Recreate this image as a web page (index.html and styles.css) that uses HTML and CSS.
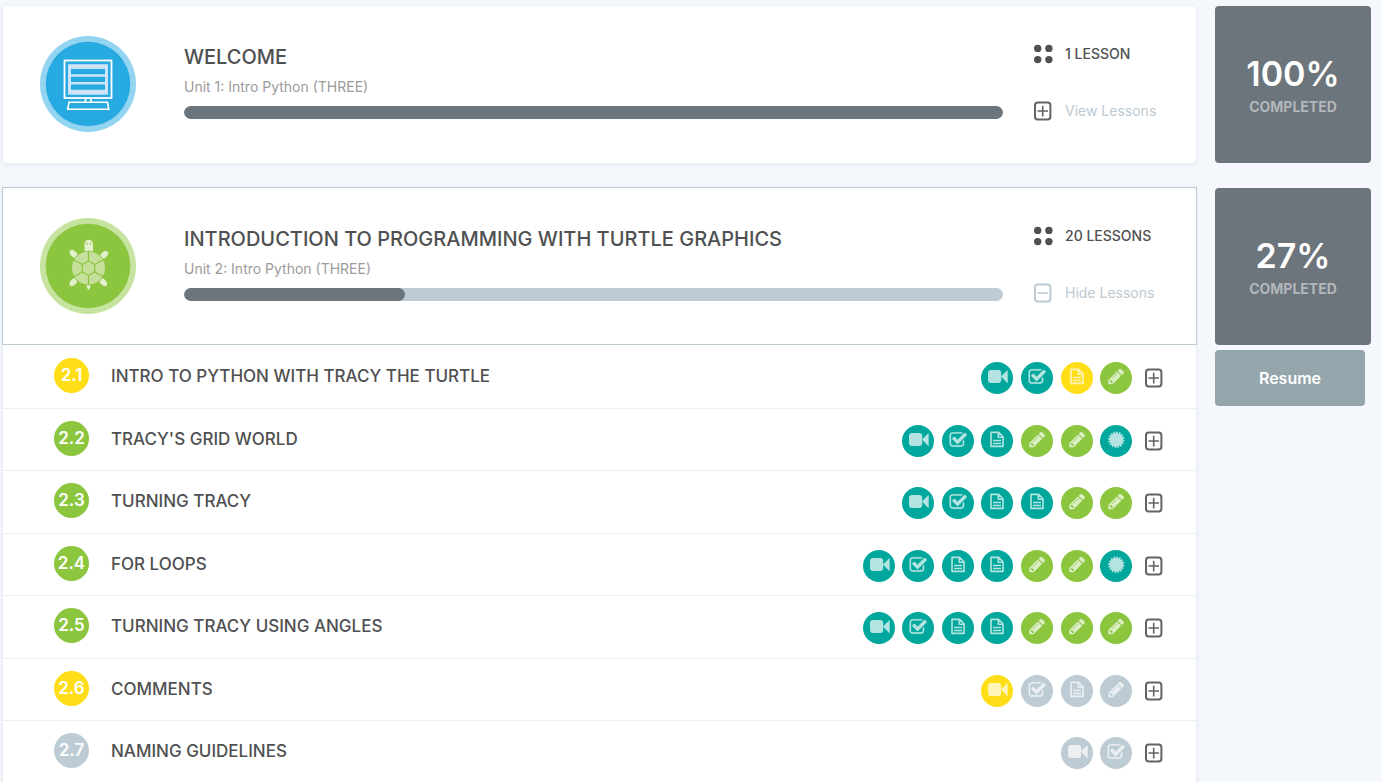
FILE: index.html
```html
<!DOCTYPE html>
<html lang="en">
<head>
<meta charset="utf-8">
<title>Intro Python (THREE)</title>
<meta name="viewport" content="width=device-width, initial-scale=1">
<link rel="stylesheet" href="styles.css">
</head>
<body>
<svg class="sprite" aria-hidden="true">
  <symbol id="video" viewBox="0 0 32 32">
    <rect x="7" y="8" width="13.2" height="13" rx="3"/>
    <path d="M20 14.5 26 8.4q.7-.5.7.4v11.6q0 .9-.7.4z"/>
  </symbol>
  <symbol id="check" viewBox="0 0 32 32">
    <path transform="translate(7 5.9) scale(.01026)" stroke="currentColor" stroke-width="30" d="M1472 930v318q0 119-84.500 203.500t-203.500 84.500h-832q-119 0-203.500-84.500t-84.500-203.500v-832q0-119 84.500-203.500t203.500-84.500h832q63 0 117 25 15 7 18 23 3 17-9 29l-49 49q-10 10-23 10-3 0-9-2-23-6-45-6h-832q-66 0-113 47t-47 113v832q0 66 47 113t113 47h832q66 0 113-47t47-113v-254q0-13 9-22l64-64q10-10 23-10 6 0 12 3 20 8 20 29zm231-489l-814 814q-24 24-57 24t-57-24l-430-430q-24-24-24-57t24-57l110-110q24-24 57-24t57 24l263 263 647-647q24-24 57-24t57 24l110 110q24 24 24 57t-24 57z"/>
  </symbol>
  <symbol id="doc" viewBox="0 0 32 32">
    <path fill="none" stroke="currentColor" stroke-width="1.600" stroke-linejoin="round" d="M10 7.400h7.600l4.400 4.400v9.600H10zM17.300 7.600v4.600h4.600"/>
    <path fill="none" stroke="currentColor" stroke-width="1.500" d="M12 15.400h8M12 18.400h8"/>
  </symbol>
  <symbol id="pencil" viewBox="0 0 32 32">
    <path transform="translate(7 5.2) scale(.0103)" d="M491 1536l91-91-235-235-91 91v107h128v128h107zm523-928q0-22-22-22-10 0-17 7l-542 542q-7 7-7 17 0 22 22 22 10 0 17-7l542-542q7-7 7-17zm-54-192l416 416-832 832h-416v-416zm683 96q0 53-37 90l-166 166-416-416 166-165q36-38 90-38 53 0 91 38l235 234q37 39 37 91z"/>
  </symbol>
  <symbol id="badge" viewBox="0 0 32 32">
    <circle cx="16.300" cy="14.700" r="6.800"/>
    <circle cx="16.300" cy="14.700" r="7.200" fill="none" stroke="currentColor" stroke-width="2" pathLength="32" stroke-dasharray="1.200 .8"/>
  </symbol>
  <symbol id="plus" viewBox="0 0 18 20">
    <rect x="1" y="1.500" width="15.400" height="17" rx="2.800" fill="none" stroke="currentColor" stroke-width="2"/>
    <path d="M8.700 4.800v10.600M3.400 10h10.600" fill="none" stroke="currentColor" stroke-width="1.600"/>
  </symbol>
  <symbol id="minus" viewBox="0 0 18 20">
    <rect x="1" y="1.500" width="15.400" height="17" rx="2.800" fill="none" stroke="currentColor" stroke-width="2"/>
    <path d="M3.400 10h10.600" fill="none" stroke="currentColor" stroke-width="1.600"/>
  </symbol>
  <symbol id="dots" viewBox="0 0 20 20">
    <circle cx="3.700" cy="4.400" r="3.700"/><circle cx="14.900" cy="4.400" r="3.700"/>
    <circle cx="3.700" cy="15.600" r="3.700"/><circle cx="14.900" cy="15.600" r="3.700"/>
  </symbol>
</svg>

<main class="course">
  <section class="unit">
    <div class="card">
      <header class="unit-head">
        <svg class="unit-icon" viewBox="0 0 96 96" aria-hidden="true">
          <circle cx="48" cy="48" r="48" fill="#93d4f0"/>
          <circle cx="48" cy="48" r="42.300" fill="#27aae1"/>
          <rect x="24.500" y="24.500" width="47" height="37.500" fill="none" stroke="#fff" stroke-width="1.800"/>
          <rect x="28" y="28.200" width="40" height="30.500" fill="#cfe3f6"/>
          <path d="M31 33h34v5.300H31zM31 40.700h34v5.300H31zM31 48.400h34v5.300H31z" fill="#27aae1"/>
          <path d="M46 62l-1 4M50.500 62l1 4M29 66.300h38.500l1.300 7H27.700z" fill="none" stroke="#fff" stroke-width="1.600"/>
        </svg>
        <div class="unit-info">
          <h2 class="unit-title">WELCOME</h2>
          <p class="unit-sub">Unit 1: Intro Python (THREE)</p>
          <div class="bar" role="progressbar" aria-label="Welcome progress" aria-valuenow="100"><div class="bar-fill" style="width:100%"></div></div>
        </div>
        <div class="unit-meta">
          <p class="count"><svg class="dots"><use href="#dots"/></svg>1 LESSON</p>
          <button type="button" class="toggle"><svg class="box"><use href="#plus"/></svg>View Lessons</button>
        </div>
      </header>
    </div>
    <aside class="side">
      <div class="score"><strong class="percent">100%</strong><span class="label">COMPLETED</span></div>
    </aside>
  </section>

  <section class="unit">
    <div class="card">
      <header class="unit-head open">
        <svg class="unit-icon" viewBox="0 0 96 96" aria-hidden="true">
          <circle cx="48" cy="48" r="48" fill="#c6e39f"/>
          <circle cx="48" cy="48" r="42.300" fill="#8cc63f"/>
          <g fill="#e2f0cc">
            <path d="M44.500 33v-7a4.300 4.300 0 0 1 8.600 0v7z"/>
            <ellipse cx="33.700" cy="36" rx="5" ry="3" transform="rotate(45 33.700 36)"/>
            <ellipse cx="64" cy="37" rx="5" ry="3" transform="rotate(-42 64 37)"/>
            <ellipse cx="33.500" cy="64" rx="5" ry="3" transform="rotate(-45 33.500 64)"/>
            <ellipse cx="63" cy="64" rx="5" ry="3" transform="rotate(45 63 64)"/>
            <path d="M46.500 67h4q0 3-2 5-2-2-2-5z"/>
          </g>
          <circle cx="47.300" cy="25.800" r=".8" fill="#8cc63f"/><circle cx="50.600" cy="25.800" r=".8" fill="#8cc63f"/>
          <circle cx="48.500" cy="50" r="17.300" fill="#8cc63f"/>
          <circle cx="48.500" cy="50" r="16.500" fill="#c5e09b"/>
          <path d="M48.500 43l6.200 3.500v7.400l-6.200 3.600-6.200-3.600v-7.400zM48.500 33v10M48.500 57.500V67M54.700 46.500l8.300-4.600M42.300 46.500 34 41.900M54.700 53.900l8.300 4.700M42.300 53.900 34 58.600" fill="none" stroke="#8cc63f" stroke-width="1.200"/>
        </svg>
        <div class="unit-info">
          <h2 class="unit-title">INTRODUCTION TO PROGRAMMING WITH TURTLE GRAPHICS</h2>
          <p class="unit-sub">Unit 2: Intro Python (THREE)</p>
          <div class="bar" role="progressbar" aria-label="Turtle graphics progress" aria-valuenow="27"><div class="bar-fill" style="width:27%"></div></div>
        </div>
        <div class="unit-meta">
          <p class="count"><svg class="dots"><use href="#dots"/></svg>20 LESSONS</p>
          <button type="button" class="toggle"><svg class="box box-light"><use href="#minus"/></svg>Hide Lessons</button>
        </div>
      </header>

      <ul class="lessons">
        <li class="lesson">
          <span class="num yellow">2.1</span><h3 class="lesson-title">INTRO TO PYTHON WITH TRACY THE TURTLE</h3>
          <div class="acts four">
            <a href="#" class="act teal" aria-label="Video"><svg><use href="#video"/></svg></a>
            <a href="#" class="act teal" aria-label="Quiz"><svg><use href="#check"/></svg></a>
            <a href="#" class="act yellow" aria-label="Example"><svg><use href="#doc"/></svg></a>
            <a href="#" class="act green" aria-label="Exercise"><svg><use href="#pencil"/></svg></a>
          </div>
          <button type="button" class="expand" aria-label="Expand 2.1"><svg class="box"><use href="#plus"/></svg></button>
        </li>
        <li class="lesson">
          <span class="num green">2.2</span><h3 class="lesson-title">TRACY'S GRID WORLD</h3>
          <div class="acts six">
            <a href="#" class="act teal" aria-label="Video"><svg><use href="#video"/></svg></a>
            <a href="#" class="act teal" aria-label="Quiz"><svg><use href="#check"/></svg></a>
            <a href="#" class="act teal" aria-label="Example"><svg><use href="#doc"/></svg></a>
            <a href="#" class="act green" aria-label="Exercise"><svg><use href="#pencil"/></svg></a>
            <a href="#" class="act green" aria-label="Exercise"><svg><use href="#pencil"/></svg></a>
            <a href="#" class="act teal" aria-label="Badge"><svg><use href="#badge"/></svg></a>
          </div>
          <button type="button" class="expand" aria-label="Expand 2.2"><svg class="box"><use href="#plus"/></svg></button>
        </li>
        <li class="lesson">
          <span class="num green">2.3</span><h3 class="lesson-title">TURNING TRACY</h3>
          <div class="acts six">
            <a href="#" class="act teal" aria-label="Video"><svg><use href="#video"/></svg></a>
            <a href="#" class="act teal" aria-label="Quiz"><svg><use href="#check"/></svg></a>
            <a href="#" class="act teal" aria-label="Example"><svg><use href="#doc"/></svg></a>
            <a href="#" class="act teal" aria-label="Example"><svg><use href="#doc"/></svg></a>
            <a href="#" class="act green" aria-label="Exercise"><svg><use href="#pencil"/></svg></a>
            <a href="#" class="act green" aria-label="Exercise"><svg><use href="#pencil"/></svg></a>
          </div>
          <button type="button" class="expand" aria-label="Expand 2.3"><svg class="box"><use href="#plus"/></svg></button>
        </li>
        <li class="lesson">
          <span class="num green">2.4</span><h3 class="lesson-title">FOR LOOPS</h3>
          <div class="acts">
            <a href="#" class="act teal" aria-label="Video"><svg><use href="#video"/></svg></a>
            <a href="#" class="act teal" aria-label="Quiz"><svg><use href="#check"/></svg></a>
            <a href="#" class="act teal" aria-label="Example"><svg><use href="#doc"/></svg></a>
            <a href="#" class="act teal" aria-label="Example"><svg><use href="#doc"/></svg></a>
            <a href="#" class="act green" aria-label="Exercise"><svg><use href="#pencil"/></svg></a>
            <a href="#" class="act green" aria-label="Exercise"><svg><use href="#pencil"/></svg></a>
            <a href="#" class="act teal" aria-label="Badge"><svg><use href="#badge"/></svg></a>
          </div>
          <button type="button" class="expand" aria-label="Expand 2.4"><svg class="box"><use href="#plus"/></svg></button>
        </li>
        <li class="lesson">
          <span class="num green">2.5</span><h3 class="lesson-title">TURNING TRACY USING ANGLES</h3>
          <div class="acts">
            <a href="#" class="act teal" aria-label="Video"><svg><use href="#video"/></svg></a>
            <a href="#" class="act teal" aria-label="Quiz"><svg><use href="#check"/></svg></a>
            <a href="#" class="act teal" aria-label="Example"><svg><use href="#doc"/></svg></a>
            <a href="#" class="act teal" aria-label="Example"><svg><use href="#doc"/></svg></a>
            <a href="#" class="act green" aria-label="Exercise"><svg><use href="#pencil"/></svg></a>
            <a href="#" class="act green" aria-label="Exercise"><svg><use href="#pencil"/></svg></a>
            <a href="#" class="act green" aria-label="Exercise"><svg><use href="#pencil"/></svg></a>
          </div>
          <button type="button" class="expand" aria-label="Expand 2.5"><svg class="box"><use href="#plus"/></svg></button>
        </li>
        <li class="lesson">
          <span class="num yellow">2.6</span><h3 class="lesson-title">COMMENTS</h3>
          <div class="acts four">
            <a href="#" class="act yellow" aria-label="Video"><svg><use href="#video"/></svg></a>
            <a href="#" class="act grey" aria-label="Quiz"><svg><use href="#check"/></svg></a>
            <a href="#" class="act grey" aria-label="Example"><svg><use href="#doc"/></svg></a>
            <a href="#" class="act grey" aria-label="Exercise"><svg><use href="#pencil"/></svg></a>
          </div>
          <button type="button" class="expand" aria-label="Expand 2.6"><svg class="box"><use href="#plus"/></svg></button>
        </li>
        <li class="lesson">
          <span class="num grey">2.7</span><h3 class="lesson-title">NAMING GUIDELINES</h3>
          <div class="acts two">
            <a href="#" class="act grey" aria-label="Video"><svg><use href="#video"/></svg></a>
            <a href="#" class="act grey" aria-label="Quiz"><svg><use href="#check"/></svg></a>
          </div>
          <button type="button" class="expand" aria-label="Expand 2.7"><svg class="box"><use href="#plus"/></svg></button>
        </li>
      </ul>
    </div>
    <aside class="side">
      <div class="score"><strong class="percent">27%</strong><span class="label">COMPLETED</span></div>
      <button type="button" class="resume">Resume</button>
    </aside>
  </section>
</main>
</body>
</html>
```
FILE: styles.css
```css
* { box-sizing: border-box; }

body {
  margin: 0;
  background: #f4f7fc;
  color: #4f5051;
  font-family: Inter, "Open Sans", sans-serif;
}

h2, h3, p, ul { margin: 0; padding: 0; }
ul { list-style: none; }
svg { display: block; fill: currentColor; }
button { border: 0; padding: 0; background: none; font: inherit; color: inherit; cursor: pointer; }

.sprite { display: none; }

.course {
  height: 100vh;
  overflow-y: auto;
  scrollbar-width: none;
  display: flex;
  flex-direction: column;
  gap: 25px;
  padding: 6px 11px 0 3px;
}

.unit { display: flex; align-items: flex-start; gap: 19px; }

.card {
  flex: 1;
  min-width: 0;
  background: #fff;
  border-radius: 4px;
  box-shadow: 0 1px 4px rgba(60, 80, 100, .12);
}

.unit-head {
  display: flex;
  align-items: flex-start;
  min-height: 157px;
  padding-left: 37px;
}

.unit-head.open {
  min-height: 158px;
  margin: -1px -1px 0;
  border: 1px solid #bdccd4;
}

.unit-icon { flex: none; width: 96px; height: 96px; margin-top: 30px; }

.unit-info { flex: 1; min-width: 0; padding-top: 39px; margin: 0 31px 0 48px; }
.unit-title { font-size: 20px; line-height: 24px; font-weight: 500; }
.unit-sub { margin: 8px 0 9px; font-size: 14px; line-height: 20px; color: #9b9b9b; }

.bar { height: 13px; border-radius: 7px; background: #bdccd4; overflow: hidden; }
.bar-fill { height: 100%; border-radius: 7px; background: #6c747c; }

.unit-meta {
  flex: none;
  width: 162px;
  padding-top: 36px;
  display: flex;
  flex-direction: column;
  align-items: flex-start;
  gap: 33px;
}

.count, .toggle { display: flex; align-items: center; line-height: 24px; }
.count { gap: 11px; font-size: 14px; font-weight: 500; }
.toggle { gap: 13px; font-size: 14px; font-weight: 400; color: #bdc9d2; }

.dots { width: 20px; height: 20px; }
.box { width: 18px; height: 20px; color: #626365; }
.box-light { color: #bdccd4; }

.lessons { display: grid; grid-auto-rows: 63px 62px; padding-top: 1px; }

.lesson {
  display: flex;
  align-items: flex-start;
  padding: 12px 33px 0 51px;
  border-bottom: 1px solid #eceeef;
}

.num {
  flex: none;
  width: 35px;
  height: 35px;
  border-radius: 50%;
  color: #fff;
  font-size: 17px;
  line-height: 35px;
  font-weight: 600;
  text-align: center;
}

.lesson-title { flex: 1; margin-left: 22px; font-size: 17px; line-height: 36px; font-weight: 500; }

.acts {
  display: grid;
  grid-template-columns: repeat(7, 1fr);
  justify-items: center;
  width: 277px;
  padding-top: 4px;
}
.six .act:first-child { grid-column-start: 2; }
.four .act:first-child { grid-column-start: 4; }
.two .act:first-child { grid-column-start: 6; }

.act { width: 32px; height: 32px; border-radius: 50%; color: #fff; }
.act svg { width: 32px; height: 32px; opacity: .7; }

.teal { background: #00a79d; }
.green { background: #8cc63f; }
.yellow { background: #ffde17; }
.grey { background: #bdccd4; }

.expand { margin: 10px 0 0 9px; }

.side { flex: none; width: 156px; }

.score {
  display: flex;
  flex-direction: column;
  align-items: center;
  height: 157px;
  padding-top: 46px;
  border-radius: 4px;
  background: #6c747c;
}
.percent { font-size: 34px; line-height: 44px; font-weight: 600; color: #fff; }
.label { font-size: 14px; line-height: 22px; font-weight: 700; color: #b3b7ba; }

.resume {
  width: 150px;
  height: 56px;
  margin-top: 5px;
  border-radius: 4px;
  background: #94a5ab;
  color: #fff;
  font-size: 16px;
  font-weight: 600;
}
```
